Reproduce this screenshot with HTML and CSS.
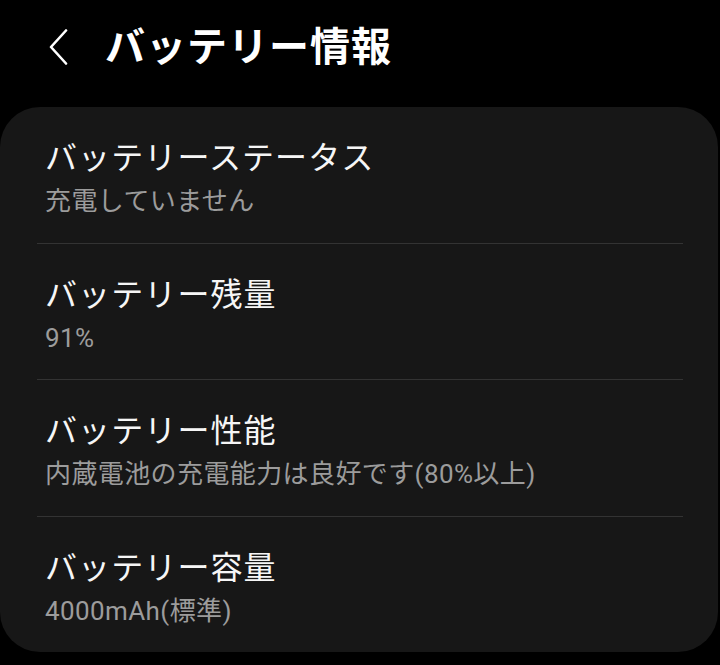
FILE: index.html
```html
<!DOCTYPE html>
<html lang="ja">
<head>
<meta charset="utf-8">
<link rel="stylesheet" href="styles.css">
</head>
<body>
<header class="topbar">
  <svg class="back" width="22" height="36" viewBox="0 0 22 36"><path d="M18 1.5 L3 18 L18 34.5" fill="none" stroke="#fff" stroke-width="2.6" stroke-linecap="round" stroke-linejoin="round"/></svg>
  <h1 class="title">バッテリー情報</h1>
</header>
<main class="card">
  <div class="row">
    <div class="row-title">バッテリーステータス</div>
    <div class="row-sub">充電していません</div>
  </div>
  <div class="divider"></div>
  <div class="row">
    <div class="row-title">バッテリー残量</div>
    <div class="row-sub">91%</div>
  </div>
  <div class="divider"></div>
  <div class="row">
    <div class="row-title">バッテリー性能</div>
    <div class="row-sub">内蔵電池の充電能力は良好です(80%以上)</div>
  </div>
  <div class="divider"></div>
  <div class="row">
    <div class="row-title">バッテリー容量</div>
    <div class="row-sub">4000mAh(標準)</div>
  </div>
</main>
</body>
</html>
```
FILE: styles.css
```css
html, body {
  margin: 0;
  padding: 0;
  background: #000;
  width: 720px;
  height: 665px;
  overflow: hidden;
  font-family: Roboto, "Noto Sans CJK JP", sans-serif;
  color: #f6f6f6;
}
.topbar {
  height: 107px;
  display: flex;
  align-items: flex-start;
  padding-left: 48px;
  box-sizing: border-box;
}
.back {
  margin-top: 29px;
  flex: none;
}
.title {
  margin: 0 0 0 35px;
  padding-top: 22px;
  font-size: 40px;
  line-height: 52px;
  font-weight: 700;
  letter-spacing: 1px;
  color: #fff;
}
.card {
  width: 718px;
  height: 545px;
  box-sizing: border-box;
  background: #171717;
  border-radius: 40px;
  display: flex;
  flex-direction: column;
}
.row {
  height: 136px;
  box-sizing: border-box;
  padding: 30px 0 0 45px;
}
.row-title {
  font-size: 32px;
  line-height: 42px;
  color: #f6f6f6;
  letter-spacing: 1.1px;
}
.row-sub {
  margin-top: 5px;
  font-size: 26px;
  line-height: 34px;
  color: #9c9c9c;
  letter-spacing: 0.4px;
}
.divider {
  height: 1px;
  margin: 0 35px 0 37px;
  background: #333;
  flex: none;
}
```
